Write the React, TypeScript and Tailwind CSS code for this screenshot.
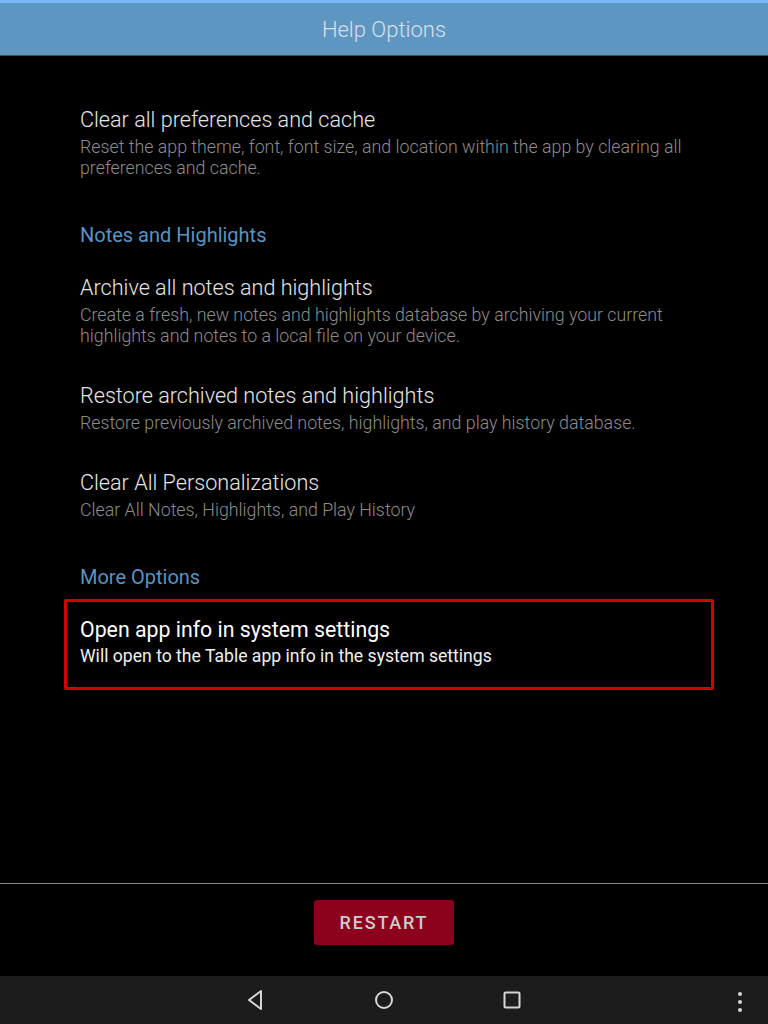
import React from 'react';

type Item = { title: string; desc: string };

const Row: React.FC<Item> = ({ title, desc }) => (
  <div className="py-[18px]">
    <div className="text-[21.6px] leading-[27px] font-light text-[#e6e6e6]">{title}</div>
    <div className="mt-[3px] text-[17.8px] leading-[21px] font-light text-[#8d8d8d]">{desc}</div>
  </div>
);

const Section: React.FC<{ label: string }> = ({ label }) => (
  <div className="pt-[26px] pb-[8px] text-[20px] leading-[26px] text-[#5b93c0]">{label}</div>
);

const App: React.FC = () => {
  return (
    <div className="h-[1024px] w-[768px] flex flex-col bg-black font-['Roboto',sans-serif]">
      <div className="h-[3px] bg-[#76b8ef]" />
      <header className="h-[53px] bg-[#5d96c1] border-b border-[#4a4a4a] flex items-center justify-center">
        <span className="text-[22px] font-light text-[#d6e1ea]">Help Options</span>
      </header>

      <main className="flex-1 pt-[32px]">
        <div className="px-[80px] pr-[70px]">
          <Row
            title="Clear all preferences and cache"
            desc="Reset the app theme, font, font size, and location within the app by clearing all preferences and cache."
          />
          <Section label="Notes and Highlights" />
          <Row
            title="Archive all notes and highlights"
            desc="Create a fresh, new notes and highlights database by archiving your current highlights and notes to a local file on your device."
          />
          <Row
            title="Restore archived notes and highlights"
            desc="Restore previously archived notes, highlights, and play history database."
          />
          <Row
            title="Clear All Personalizations"
            desc="Clear All Notes, Highlights, and Play History"
          />
          <Section label="More Options" />
        </div>
        <div className="ml-[64px] w-[650px] h-[91px] mt-[1px] border-[3px] border-[#d40000] rounded-[2px] px-[13px] pt-[14px]">
          <div className="text-[21.3px] leading-[27px] text-white">Open app info in system settings</div>
          <div className="mt-[3px] text-[17.6px] leading-[21px] text-[#f0f0f0]">
            Will open to the Table app info in the system settings
          </div>
        </div>
      </main>

      <div className="h-px bg-[#8a8a8a]" />
      <footer className="h-[92px] flex justify-center pt-4">
        <button className="w-[140px] h-[45px] rounded-[3px] bg-[#8c001d] text-[18px] font-medium tracking-[1.8px] text-[#cccccc]">
          RESTART
        </button>
      </footer>

      <nav className="h-[48px] bg-[#1c1c1c] relative flex items-center justify-center gap-[104px]">
        <svg width="24" height="24" viewBox="0 0 24 24" fill="none" stroke="#d6d6d6" strokeWidth="2" strokeLinejoin="round">
          <path d="M17 3 L17 21 L5 12 Z" />
        </svg>
        <svg width="24" height="24" viewBox="0 0 24 24" fill="none" stroke="#d6d6d6" strokeWidth="2">
          <circle cx="12" cy="12" r="8" />
        </svg>
        <svg width="24" height="24" viewBox="0 0 24 24" fill="none" stroke="#d6d6d6" strokeWidth="2">
          <rect x="4.5" y="4.5" width="15" height="15" rx="1" />
        </svg>
        <div className="absolute right-[26px] top-[16px] flex flex-col gap-[4px]">
          <span className="w-[4px] h-[4px] rounded-full bg-[#d6d6d6]" />
          <span className="w-[4px] h-[4px] rounded-full bg-[#d6d6d6]" />
          <span className="w-[4px] h-[4px] rounded-full bg-[#d6d6d6]" />
        </div>
      </nav>
    </div>
  );
};

export default App;
